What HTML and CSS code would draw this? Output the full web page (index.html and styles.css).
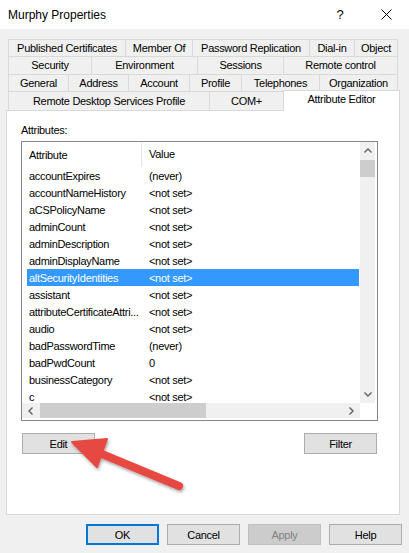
FILE: index.html
```html
<!DOCTYPE html>
<html>
<head>
<meta charset="utf-8">
<title>Murphy Properties</title>
<link rel="stylesheet" href="styles.css">
</head>
<body>
<div class="window">
  <div class="titlebar">
    <span class="title">Murphy Properties</span>
    <span class="capbtn help">?</span>
    <span class="capbtn">
      <svg width="11" height="11" viewBox="0 0 11 11"><path d="M0.5 0.5 L10.5 10.5 M10.5 0.5 L0.5 10.5" stroke="#000" stroke-width="1" fill="none"/></svg>
    </span>
  </div>

  <div class="tabs">
    <div class="tabrow r1">
      <div class="tab">Published Certificates</div>
      <div class="tab">Member Of</div>
      <div class="tab">Password Replication</div>
      <div class="tab">Dial-in</div>
      <div class="tab">Object</div>
    </div>
    <div class="tabrow r2">
      <div class="tab">Security</div>
      <div class="tab">Environment</div>
      <div class="tab">Sessions</div>
      <div class="tab">Remote control</div>
    </div>
    <div class="tabrow r3">
      <div class="tab">General</div>
      <div class="tab">Address</div>
      <div class="tab">Account</div>
      <div class="tab">Profile</div>
      <div class="tab">Telephones</div>
      <div class="tab">Organization</div>
    </div>
    <div class="tabrow r4">
      <div class="tab">Remote Desktop Services Profile</div>
      <div class="tab">COM+</div>
      <div class="tab sel">Attribute Editor</div>
    </div>
  </div>

  <div class="pane">
    <div class="label">Attributes:</div>
    <div class="listbox">
      <div class="viewport">
        <div class="header">
          <div class="hcell first">Attribute</div>
          <div class="hcell">Value</div>
        </div>
        <div class="row"><span>accountExpires</span><span>(never)</span></div>
        <div class="row"><span>accountNameHistory</span><span>&lt;not set&gt;</span></div>
        <div class="row"><span>aCSPolicyName</span><span>&lt;not set&gt;</span></div>
        <div class="row"><span>adminCount</span><span>&lt;not set&gt;</span></div>
        <div class="row"><span>adminDescription</span><span>&lt;not set&gt;</span></div>
        <div class="row"><span>adminDisplayName</span><span>&lt;not set&gt;</span></div>
        <div class="row selected"><span>altSecurityIdentities</span><span>&lt;not set&gt;</span></div>
        <div class="row"><span>assistant</span><span>&lt;not set&gt;</span></div>
        <div class="row"><span>attributeCertificateAttri...</span><span>&lt;not set&gt;</span></div>
        <div class="row"><span>audio</span><span>&lt;not set&gt;</span></div>
        <div class="row"><span>badPasswordTime</span><span>(never)</span></div>
        <div class="row"><span>badPwdCount</span><span>0</span></div>
        <div class="row"><span>businessCategory</span><span>&lt;not set&gt;</span></div>
        <div class="row"><span>c</span><span>&lt;not set&gt;</span></div>
      </div>
      <div class="vscroll">
        <div class="sbtn v"><svg width="8" height="5" viewBox="0 0 8 5"><path d="M0.5 4.5 L4 1 L7.5 4.5" stroke="#606060" stroke-width="1.4" fill="none"/></svg></div>
        <div class="vthumb"></div>
        <div class="fill"></div>
        <div class="sbtn v"><svg width="8" height="5" viewBox="0 0 8 5"><path d="M0.5 0.5 L4 4 L7.5 0.5" stroke="#606060" stroke-width="1.4" fill="none"/></svg></div>
      </div>
      <div class="hscroll">
        <div class="sbtn h"><svg width="5" height="8" viewBox="0 0 5 8"><path d="M4.5 0.5 L1 4 L4.5 7.5" stroke="#606060" stroke-width="1.4" fill="none"/></svg></div>
        <div class="hthumb"></div>
        <div class="fill"></div>
        <div class="sbtn h"><svg width="5" height="8" viewBox="0 0 5 8"><path d="M0.5 0.5 L4 4 L0.5 7.5" stroke="#606060" stroke-width="1.4" fill="none"/></svg></div>
      </div>
      <div class="corner"></div>
    </div>
    <div class="actions">
      <button class="btn">Edit</button>
      <button class="btn">Filter</button>
    </div>
  </div>

  <div class="footer">
    <button class="btn default">OK</button>
    <button class="btn">Cancel</button>
    <button class="btn disabled">Apply</button>
    <button class="btn">Help</button>
  </div>

  <svg class="arrow" width="409" height="553" viewBox="0 0 409 553">
    <defs>
      <filter id="sh" x="-20%" y="-20%" width="140%" height="160%">
        <feDropShadow dx="1" dy="2" stdDeviation="1.5" flood-color="#000" flood-opacity="0.35"/>
      </filter>
    </defs>
    <g filter="url(#sh)" fill="#e64a42" stroke="#e64a42">
      <line x1="97" y1="452" x2="179" y2="486" stroke-width="8" stroke-linecap="round"/>
      <polygon points="72,442 107,439 97,467" stroke-width="2" stroke-linejoin="round"/>
    </g>
  </svg>
</div>
</body>
</html>
```
FILE: styles.css
```css
* { box-sizing: border-box; }
html, body { margin: 0; padding: 0; }
body {
  width: 409px;
  height: 553px;
  overflow: hidden;
  background: #f0f0f0;
  font-family: "Liberation Sans", Arial, sans-serif;
  font-size: 11px;
  letter-spacing: -0.3px;
  color: #000;
}
.window { position: relative; width: 409px; height: 553px; }

/* title bar */
.titlebar {
  height: 29px;
  background: #fff;
  display: flex;
  align-items: center;
  padding-left: 8px;
}
.title { flex: 1; font-size: 12px; letter-spacing: 0; }
.capbtn {
  width: 46px;
  height: 29px;
  display: flex;
  align-items: center;
  justify-content: center;
}
.help { font-size: 13px; letter-spacing: 0; }

/* tabs */
.tabs { padding: 10px 0 0 8px; }
.tabrow { display: grid; }
.r1 { grid-template-columns: 117px 67px 117px 45px 44px; height: 17px; }
.r2 { grid-template-columns: 83px 106px 86px 115px; height: 18px; }
.r3 { grid-template-columns: 60px 60px 61px 52px 78px 79px; height: 17px; }
.r4 { grid-template-columns: 201px 75px 116px; height: 19px; }
.tab {
  border-top: 1px solid #d9d9d9;
  border-left: 1px solid #d9d9d9;
  display: flex;
  align-items: center;
  justify-content: center;
  white-space: nowrap;
  padding-bottom: 1px;
}
.tab:last-child { border-right: 1px solid #d9d9d9; }
.r4 .tab:nth-child(2) { border-right: 1px solid #d9d9d9; }
.tab.sel {
  position: relative;
  z-index: 1;
  background: #fff;
  height: 21px;
  margin-top: -1px;
  border-left: 1px solid #d9d9d9;
  align-items: flex-start;
  padding-top: 2px;
  margin-left: -1px;
}

/* pane */
.pane {
  margin-left: 6px;
  width: 394px;
  height: 405px;
  background: #fff;
  border: 1px solid #d9d9d9;
  padding-left: 14px;
}
.label { margin-top: 11px; line-height: 16px; height: 16px; }
.listbox {
  margin-top: 3px;
  width: 357px;
  height: 280px;
  border: 1px solid #828790;
  padding: 0 2px 2px 0;
  display: grid;
  grid-template-columns: 1fr 15px;
  grid-template-rows: 1fr 15px;
}
.viewport { overflow: hidden; }
.header {
  display: grid;
  grid-template-columns: 120px 1fr;
  height: 25px;
}
.hcell {
  display: flex;
  align-items: center;
  padding-left: 7px;
  padding-bottom: 1px;
}
.hcell.first { border-right: 1px solid #e5e5e5; margin: 1px 0 0 0; }
.row {
  display: grid;
  grid-template-columns: 120px 1fr;
  height: 17px;
  margin: 0 1px 0 5px;
  align-items: center;
  white-space: nowrap;
}
.row span { padding-left: 2px; overflow: hidden; }
.row.selected { background: #3399ff; color: #fff; }

.vscroll, .hscroll { background: #f0f0f0; display: flex; }
.vscroll { flex-direction: column; }
.sbtn { display: flex; align-items: center; justify-content: center; flex: none; }
.sbtn.v { height: 17px; }
.sbtn.h { width: 17px; }
.vthumb { height: 17px; margin-top: 1px; background: #cdcdcd; flex: none; }
.hthumb { width: 166px; margin-left: 1px; background: #cdcdcd; flex: none; }
.fill { flex: 1; }
.corner { background: #fff; }

/* buttons */
.btn {
  width: 73px;
  height: 21px;
  background: #e1e1e1;
  border: 1px solid #adadad;
  font-family: inherit;
  font-size: 11px;
  letter-spacing: -0.3px;
  color: #000;
  padding: 0;
  margin: 0;
}
.actions {
  width: 357px;
  margin-top: 12px;
  padding: 0 1px;
  display: flex;
  justify-content: space-between;
}
.footer {
  margin-top: 9px;
  padding-left: 86px;
  display: flex;
  gap: 8px;
}
.btn.default { border: 2px solid #0078d7; }
.btn.disabled { background: #cccccc; border-color: #bfbfbf; color: #838383; }

.arrow { position: absolute; left: 0; top: 0; pointer-events: none; }
```
